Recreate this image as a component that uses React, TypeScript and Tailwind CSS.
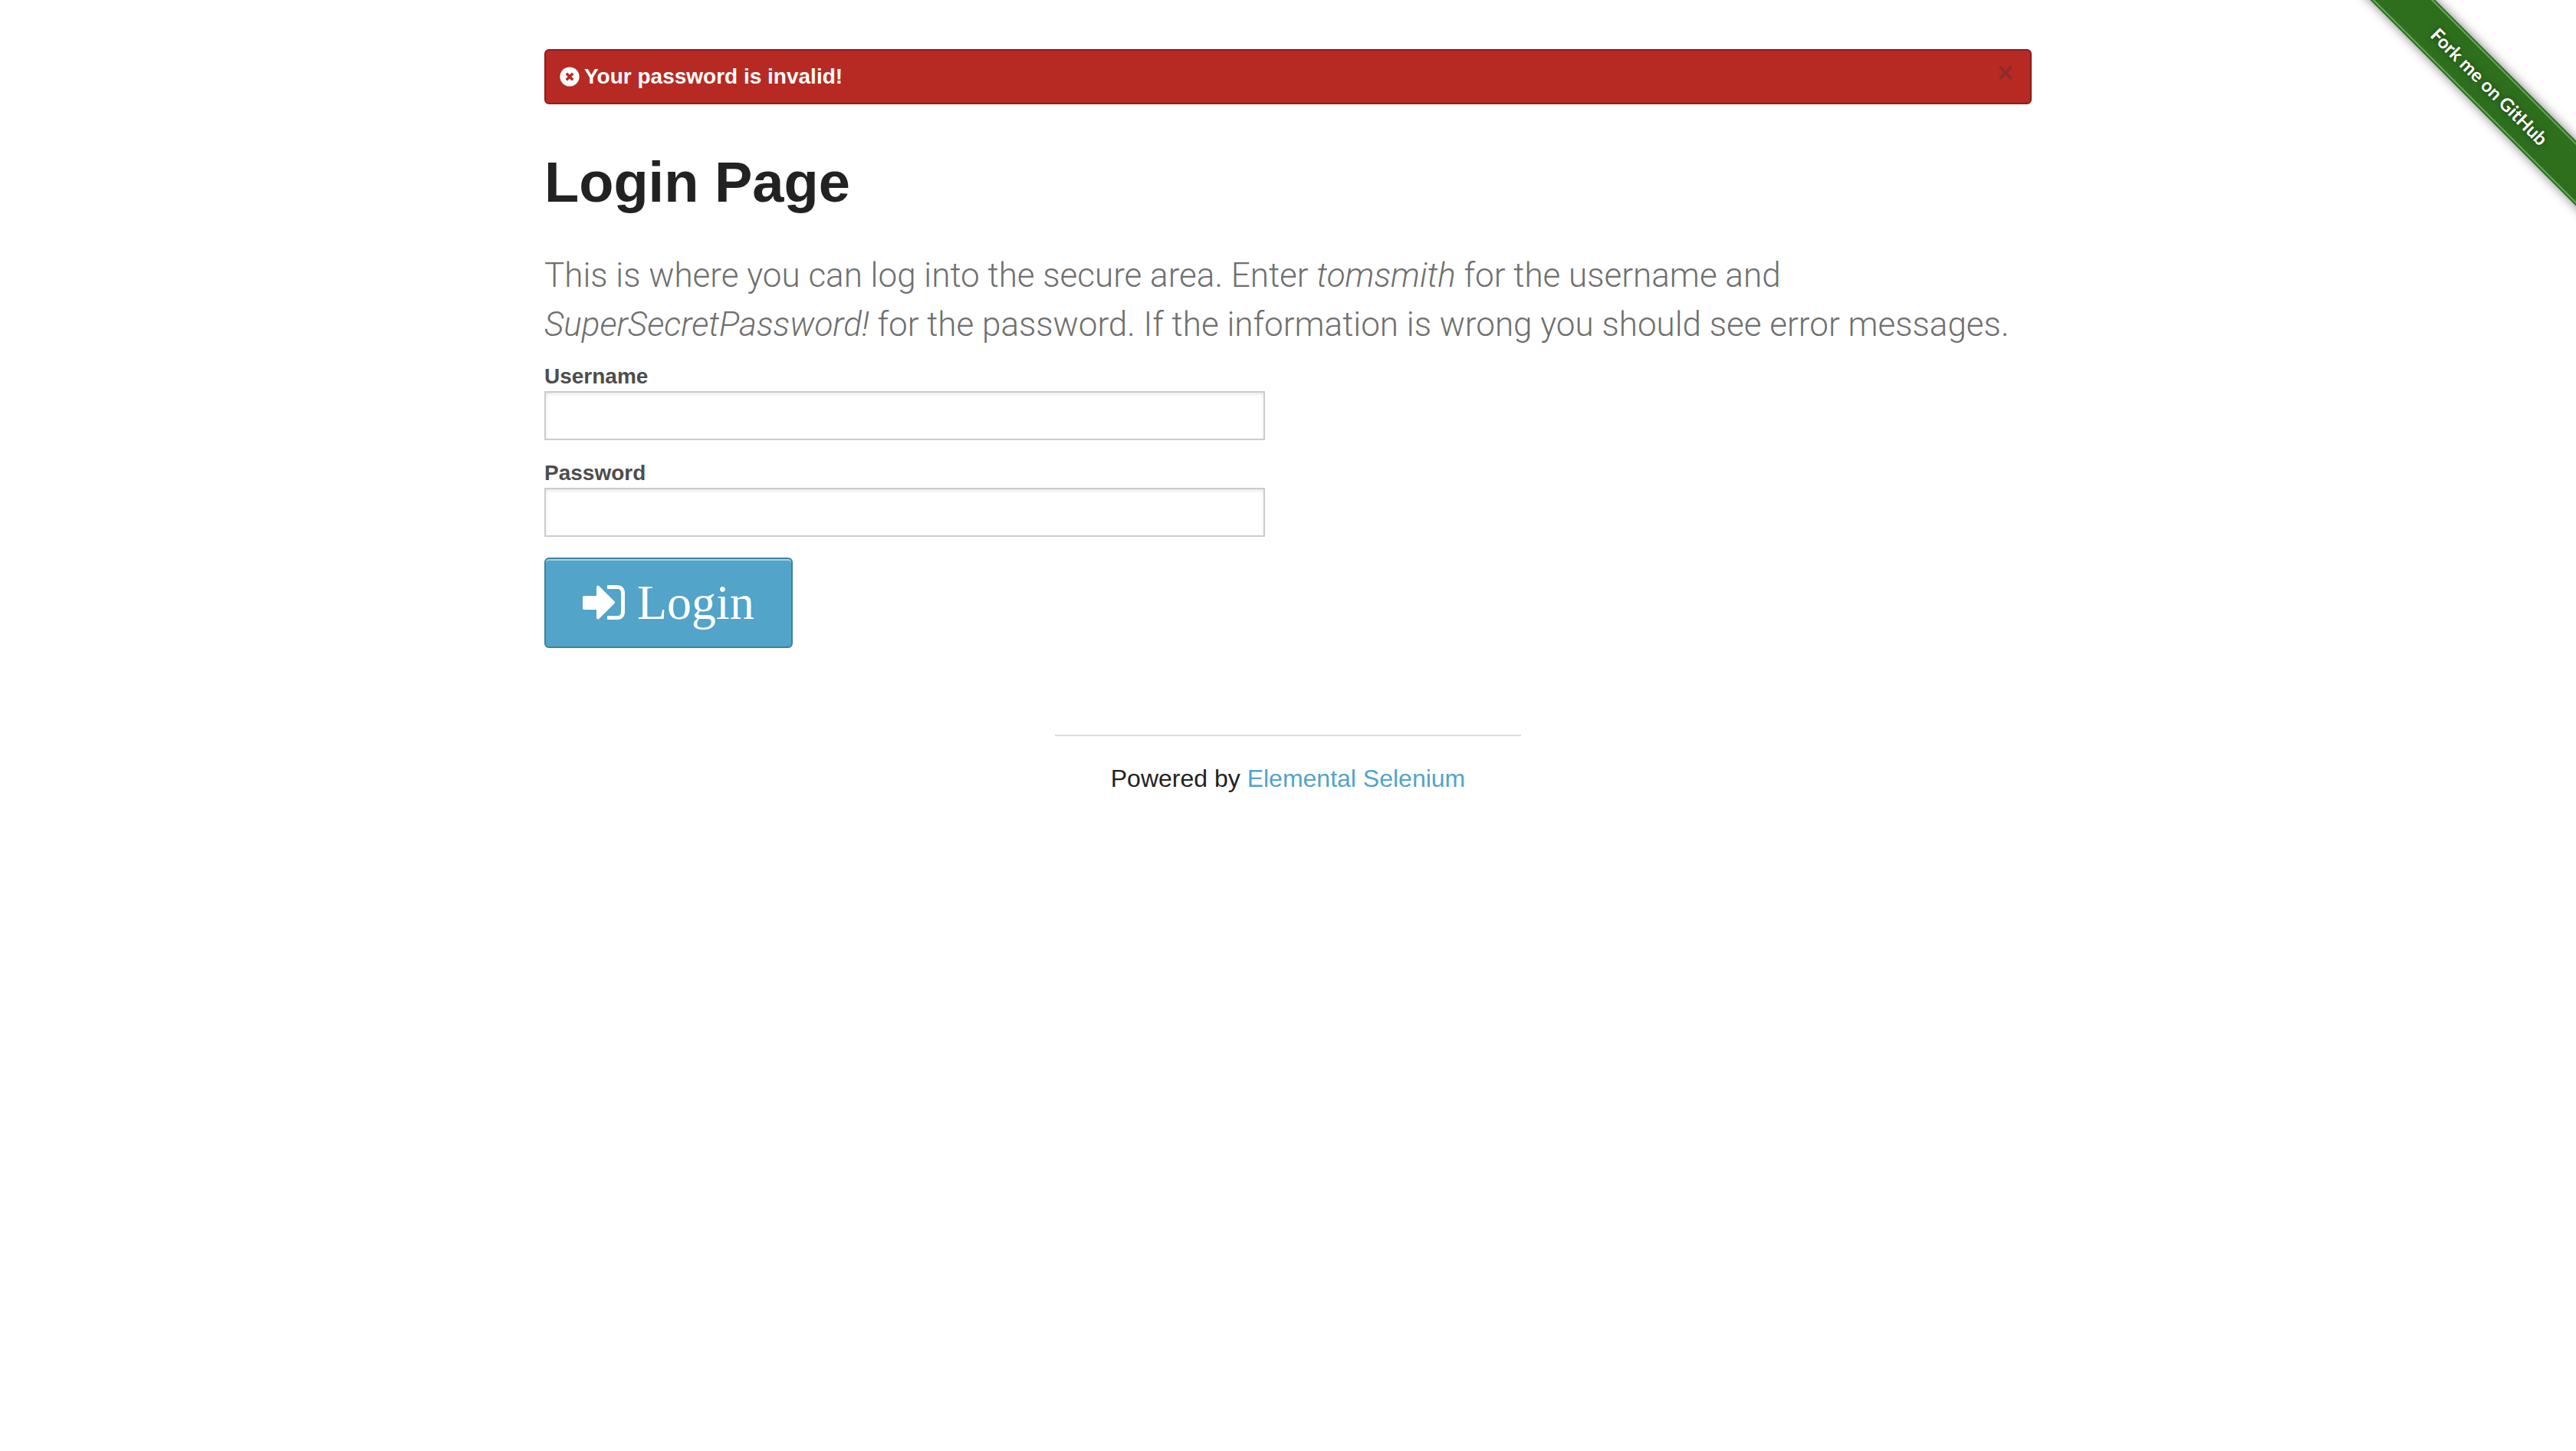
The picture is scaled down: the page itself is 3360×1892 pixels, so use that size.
import type { ReactNode } from "react";

function TimesCircleIcon() {
  return (
    <svg viewBox="0 0 26 26" className="size-[26px] shrink-0" aria-hidden="true">
      <circle cx="13" cy="13" r="12.6" fill="#fff" />
      <path d="M8.8 8.8l8.4 8.4M17.2 8.8l-8.4 8.4" stroke="#b72a23" strokeWidth="3.5" />
    </svg>
  );
}

function SignInIcon() {
  return (
    <svg viewBox="0 0 56 48" className="h-12 w-14 shrink-0" fill="#fff" aria-hidden="true">
      <path d="M2 15h16V3.5c0-2 2.2-2.600 3.500-1.300l20 20c.8.800.8 1.800 0 2.600l-20 20c-1.300 1.300-3.500.7-3.500-1.300V33H2c-1.200 0-2-.8-2-2V17c0-1.200.8-2 2-2z" />
      <path d="M33 1h12c6 0 10 4 10 10v25c0 6-4 10-10 10H33c-.6 0-1-.4-1-1v-3c0-.6.4-1 1-1h12c3.500 0 5-1.500 5-5V11c0-3.500-1.500-5-5-5H33c-.6 0-1-.4-1-1V2c0-.6.4-1 1-1z" />
    </svg>
  );
}

function Field({ id, type, children }: { id: string; type: string; children: ReactNode }) {
  return (
    <div className="mb-[27px] flex flex-col">
      <label htmlFor={id} className="mb-[3px] text-[28px] leading-8 font-bold text-[#4d4d4d]">
        {children}
      </label>
      <input
        id={id}
        name={id}
        type={type}
        className="h-16 w-full border-2 border-[#ccc] bg-white px-4 text-[28px] shadow-[inset_0_2px_4px_rgba(0,0,0,0.1)] outline-none"
      />
    </div>
  );
}

function ForkRibbon() {
  return (
    <a href="#fork" className="absolute top-0 right-0 block size-[298px] overflow-hidden">
      <span className="absolute top-[83px] -left-[65px] flex h-[60px] w-[500px] rotate-45 flex-col bg-[#2e6f1e] py-[2px] shadow-[0_0_14px_rgba(0,0,0,0.5)]">
        <span className="flex flex-1 items-center justify-center border-y-2 border-[#6ba560] text-2xl font-bold text-white [font-family:Lato,sans-serif] [text-shadow:0_0_6px_rgba(0,0,0,0.5)]">
          Fork me on GitHub
        </span>
      </span>
    </a>
  );
}

export default function App() {
  return (
    <div className="relative min-h-screen bg-white text-[#222] antialiased [font-family:'Liberation_Sans',Arial,sans-serif]">
      <ForkRibbon />
      <div className="mx-auto max-w-[2000px] px-[30px] pt-16">
        <div
          role="alert"
          className="flex h-[72px] items-start justify-between rounded-md border-2 border-[#8b1f1a] bg-[#b72a23] pt-[18px] pr-[22px] pl-[18px] text-white"
        >
          <div className="flex items-center gap-1.5 text-[28px] leading-8 font-bold">
            <TimesCircleIcon />
            Your password is invalid!
          </div>
          <button
            type="button"
            aria-label="Close"
            className="text-4xl leading-[22px] font-bold text-[#333] opacity-30"
          >
            ×
          </button>
        </div>

        <h1 className="mt-[50px] text-[74px] leading-[104px] font-bold">Login Page</h1>
        <p className="mt-[37px] text-[44px] leading-16 font-light text-[#6f6f6f] [font-family:Roboto,sans-serif]">
          This is where you can log into the secure area. Enter <em>tomsmith</em> for the username and{" "}
          <em>SuperSecretPassword!</em> for the password. If the information is wrong you should see error
          messages.
        </p>

        <form className="mt-5" onSubmit={(e) => e.preventDefault()}>
          <div className="w-[calc(50%-30px)]">
            <Field id="username" type="text">
              Username
            </Field>
            <Field id="password" type="password">
              Password
            </Field>
          </div>
          <button
            type="submit"
            className="flex h-[118px] items-center gap-[15px] rounded-md border-2 border-[#3d819e] bg-[#52a4c9] px-12 text-[64px] leading-16 text-white shadow-[inset_0_2px_0_rgba(255,255,255,0.5)] [font-family:'Liberation_Serif',serif]"
          >
            <SignInIcon />
            Login
          </button>
        </form>
      </div>

      <footer className="mx-auto mt-[113px] max-w-[608px] border-t-2 border-[#ddd] pt-[30px] text-center text-[32px] leading-[51px]">
        Powered by{" "}
        <a href="#elemental-selenium" className="text-[#52a4c9]">
          Elemental Selenium
        </a>
      </footer>
    </div>
  );
}
